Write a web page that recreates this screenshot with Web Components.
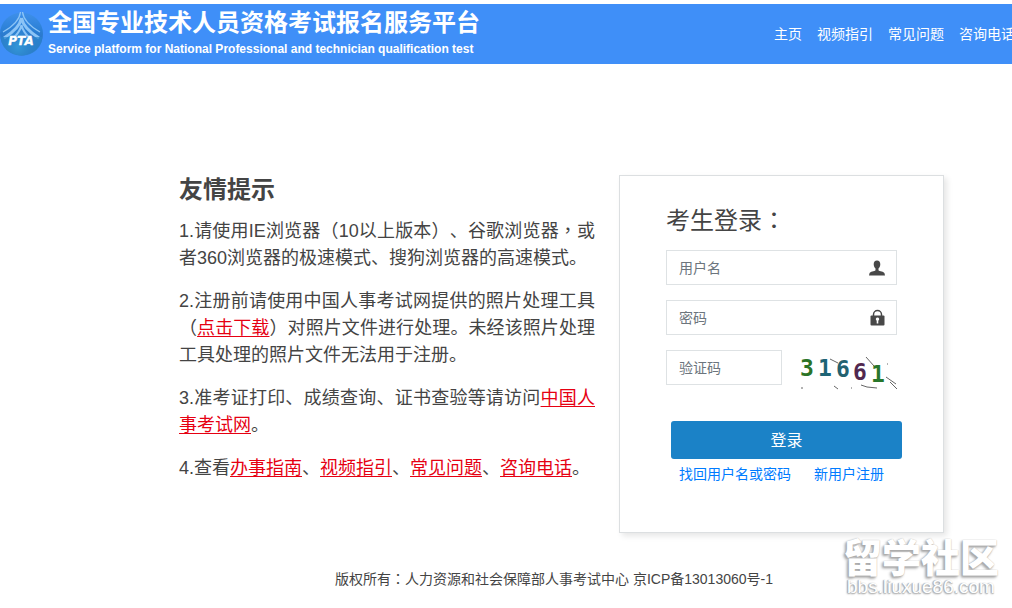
<!DOCTYPE html>
<html lang="zh-CN">
<head>
<meta charset="utf-8">
<title>全国专业技术人员资格考试报名服务平台</title>
<style>
html,body{margin:0;background:#fff}
body{font-family:"Liberation Sans","Noto Sans CJK SC",sans-serif;color:#444;text-spacing-trim:space-all;overflow-x:hidden}
</style>
</head>
<body>
<pta-page></pta-page>
<script>
const define = (name, html) => customElements.define(name, class extends HTMLElement {
  constructor() {
    super();
    this.attachShadow({ mode: 'open' }).innerHTML = html;
  }
});

define('pta-logo', `
<style>:host{display:block;width:44px;height:44px;flex:none}svg{display:block}</style>
<svg width="44" height="44" viewBox="0 0 44 44" aria-hidden="true">
  <defs>
    <linearGradient id="g" x1="0" y1="0" x2="0" y2="1"><stop offset="0" stop-color="#3f90ea"/><stop offset=".4" stop-color="#2b80d6"/><stop offset="1" stop-color="#2a64b0"/></linearGradient>
    <radialGradient id="h" cx=".42" cy=".8" r=".5"><stop offset="0" stop-color="#4cc0ee"/><stop offset="1" stop-color="#2a79c8" stop-opacity="0"/></radialGradient>
  </defs>
  <circle cx="21.500" cy="22" r="21.500" fill="url(#g)"/>
  <circle cx="21.500" cy="22" r="21.500" fill="url(#h)"/>
  <g fill="none" stroke="#8cc4f6">
    <path d="M20.500 0C19.500 9 12 15 3 20M22.500 0c1 9 8.500 15 17.500 20" stroke-width="1.300"/>
    <path d="M21.500 6C20 14 12 21 4 26M21.500 6c1.500 8 9.500 15 17.500 20" stroke-width="3"/>
    <path d="M21.500 13c-1 5-4 9-8 13M21.500 13c1 5 4 9 8 13" stroke-width="2"/>
  </g>
  <path d="M1 25h41c0 11-9 18.500-20.500 18.500S1 36 1 25z" fill="#2b86cf" opacity=".7"/>
  <text x="21" y="33" text-anchor="middle" font-family="DejaVu Sans,sans-serif" font-size="12" font-weight="700" font-style="italic" fill="#fff" stroke="#fff" stroke-width=".3">PTA</text>
</svg>`);

define('pta-header', `
<style>
:host{display:flex;align-items:center;justify-content:space-between;height:60px;margin-top:4px;background:#3f8ff8;color:#fff;overflow:hidden}
.brand{display:flex;align-items:center;gap:4px;flex:none}
h1{margin:0;font-size:24px;line-height:32px;font-weight:700;white-space:nowrap}
p{margin:0;font-size:12px;line-height:20px;font-weight:700;white-space:nowrap}
.names{padding-bottom:2px}
nav{display:flex;gap:15px;flex:none;margin-right:-3px}
a{color:#fff;text-decoration:none;font-size:14px;line-height:20px;white-space:nowrap}
</style>
<div class="brand"><pta-logo></pta-logo><div class="names"><h1>全国专业技术人员资格考试报名服务平台</h1><p lang="en">Service platform for National Professional and technician qualification test</p></div></div>
<nav><a href="#home">主页</a><a href="#video">视频指引</a><a href="#faq">常见问题</a><a href="#phone">咨询电话</a></nav>`);

define('pta-tips', `
<style>
:host{display:block}
h2{margin:0 0 11px;font-size:24px;line-height:30px;font-weight:700}
p{margin:0 0 16px;font-size:18px;line-height:27px;text-align:justify}
a{color:#e60012;text-decoration:underline;text-underline-offset:2px;text-decoration-thickness:1px}
.mid{font-family:"Noto Sans CJK TC",sans-serif}
</style>
<h2>友情提示</h2>
<p>1.请使用IE浏览器（10以上版本）、谷歌浏览器<span class="mid" lang="zh-TW">，</span>或者360浏览器的极速模式、搜狗浏览器的高速模式。</p>
<p>2.注册前请使用中国人事考试网提供的照片处理工具（<a href="#download">点击下载</a>）对照片文件进行处理。未经该照片处理工具处理的照片文件无法用于注册。</p>
<p>3.准考证打印、成绩查询、证书查验等请访问<a href="#cpta">中国人事考试网</a>。</p>
<p>4.查看<a href="#guide">办事指南</a>、<a href="#video">视频指引</a>、<a href="#faq">常见问题</a>、<a href="#phone">咨询电话</a>。</p>`);

customElements.define('pta-field', class extends HTMLElement {
  constructor() {
    super();
    const label = this.getAttribute('label');
    const type = this.getAttribute('type') || 'text';
    this.attachShadow({ mode: 'open' }).innerHTML = `
<style>
:host{display:flex;align-items:center;box-sizing:border-box;height:35px;border:1px solid #dee2e4;background:#fff;padding:0 11px 0 12px}
input{flex:1;min-width:0;border:0;outline:0;padding:0;background:none;font:inherit;font-size:14px;line-height:20px;color:#444}
input::placeholder{color:#6c757d;opacity:1}
</style>
<input type="${type}" placeholder="${label}" aria-label="${label}"><slot></slot>`;
  }
});

define('pta-captcha', `
<style>:host{display:block;width:104px;height:40px}svg{display:block}text{font-family:"DejaVu Sans Mono",monospace;font-weight:700;font-size:23px}</style>
<svg width="104" height="40" viewBox="0 0 104 40" role="img" aria-label="验证码图片">
  <path d="M34 9l8 4M70 7l8 9M90 27l10 7M94 32l7 7M65 35l6 2 10 1M38 36l4 3M5 38h2M55 38h1M91 14h1" fill="none" stroke="#666"/>
  <text x="4" y="26" fill="#2b7326">3</text><text x="22" y="26" fill="#1d6475">1</text><text x="40" y="27" fill="#23616f">6</text><text x="57" y="30" fill="#51284f">6</text><text x="75" y="32" fill="#28762b">1</text>
</svg>`);

define('pta-login', `
<style>
:host{display:block;box-sizing:border-box;height:358px;border:1px solid #dcdfe1;background:#fff;box-shadow:3px 3px 6px #0000001a;padding:29px 46px 0}
h2{margin:0 0 13px;font-size:24px;line-height:32px;font-weight:400}
.mid{font-family:"Noto Sans CJK TC",sans-serif;line-height:1}
form{display:grid;gap:15px}
.row{display:grid;grid-template-columns:116px 1fr;gap:14px;height:40px;align-items:start}
pta-captcha{margin-right:-4px}
svg{display:block;flex:none}
button{font:inherit;font-size:16px;height:38px;border:0;border-radius:3px;background:#1b82c7;color:#fff;padding:0 0 2px;margin:16px -5px 0 5px}
.links{display:flex;gap:23px;padding:5px 0 0 13px}
a{font-size:14px;line-height:20px;color:#007bff;text-decoration:none;white-space:nowrap}
</style>
<h2>考生登录<span class="mid" lang="zh-TW">：</span></h2>
<form>
  <pta-field label="用户名"><svg width="16" height="16" viewBox="0 0 16 16" fill="#484848"><path d="M8 .5c2.200 0 3.300 1.700 3.300 3.700 0 1.800-.8 3.500-1.800 4.300v1.700c1 1.200 5.500 1.300 6 3l.5 2.300H0l.5-2.300c.5-1.700 5-1.800 6-3V8.500c-1-.8-1.800-2.500-1.800-4.300C4.700 2.200 5.800.5 8 .5z"/></svg></pta-field>
  <pta-field label="密码" type="password"><svg width="15" height="17" viewBox="0 0 15 17"><path d="M3.500 8V5.500a4 4 0 0 1 8 0V8" fill="none" stroke="#484848" stroke-width="1.500"/><rect x=".5" y="6.500" width="14" height="10" rx="1" fill="#484848"/><path d="M7.500 8.500a1.700 1.700 0 0 1 .8 3.200V14.500H6.700v-2.800a1.700 1.700 0 0 1 .8-3.200z" fill="#fff"/></svg></pta-field>
  <div class="row"><pta-field label="验证码"></pta-field><pta-captcha></pta-captcha></div>
  <button type="button">登录</button>
</form>
<div class="links"><a href="#recover">找回用户名或密码</a><a href="#register">新用户注册</a></div>`);

define('pta-watermark', `
<style>
:host{display:block;position:absolute;right:13px;bottom:12px;color:#fff;text-align:center}
b{display:block;font-weight:900;font-size:39px;line-height:38px;text-shadow:-1px 1px 2px #aaa,-2px 2px 3px #aaa,0 0 1px #bbb}
span{display:block;font-size:19px;line-height:18px;text-shadow:-1px 0 1px #aaa,0 1px 1px #bbb,-1px 1px 2px #aaa}
</style>
<b>留学社区</b><span>bbs.liuxue86.com</span>`);

define('pta-page', `
<style>
:host{display:flow-root;position:relative;min-height:100vh;overflow:hidden}
main{display:grid;grid-template-columns:minmax(0,416px) 325px;gap:24px;justify-content:end;align-items:start;padding:111px 68px 0 20px}
footer{margin-top:34px;padding-left:96px;font-size:14px;line-height:22px;text-align:center}
.mid{font-family:"Noto Sans CJK TC",sans-serif}
</style>
<pta-header></pta-header>
<main><pta-tips></pta-tips><pta-login></pta-login></main>
<footer>版权所有<span class="mid" lang="zh-TW">：</span>人力资源和社会保障部人事考试中心 京ICP备13013060号-1</footer>
<pta-watermark></pta-watermark>`);
</script>
</body>
</html>
